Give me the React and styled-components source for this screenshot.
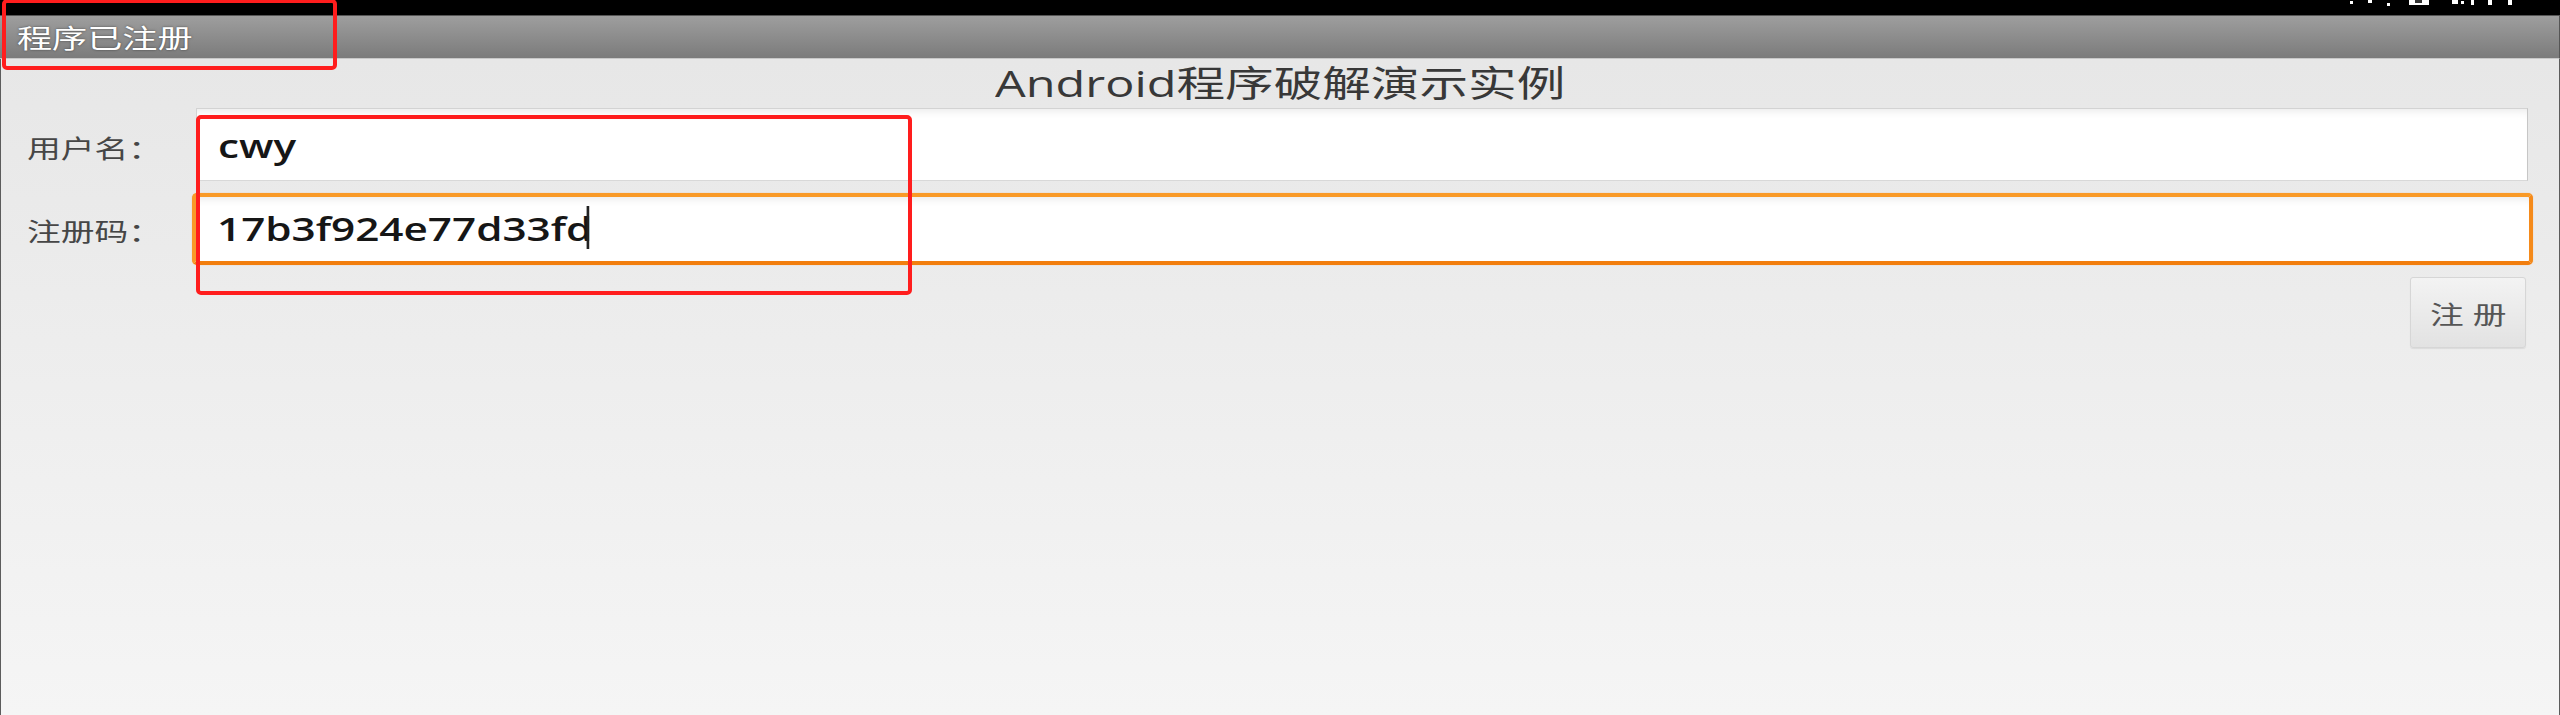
import React from 'react'
import styled, { createGlobalStyle } from 'styled-components'

// the device screenshot is stretched sideways, so text is widened to match
const STRETCH = 1.35
const FONT = `"Open Sans", "Noto Sans CJK SC", sans-serif`

const GlobalStyle = createGlobalStyle`
  html, body {
    margin: 0;
    padding: 0;
    background: #000;
  }
  body {
    font-family: ${FONT};
  }
`

const Screen = styled.div`
  position: relative;
  width: 2560px;
  height: 715px;
  overflow: hidden;
  display: flex;
  flex-direction: column;
  background: #000;
`

const StatusBar = styled.div`
  height: 15px;
  flex: none;
  box-sizing: border-box;
  padding-right: 35px;
  background: #000;
  display: flex;
  justify-content: flex-end;
`

const TitleBar = styled.div`
  height: 44px;
  flex: none;
  box-sizing: border-box;
  padding-left: 17px;
  display: flex;
  align-items: center;
  background: linear-gradient(#9e9e9e, #7b7b7b);
  border-top: 1px solid #555;
  border-bottom: 1px solid #c8c8c8;
  border-right: 1px solid #555;
  color: #fff;
  font-size: 26px;
  text-shadow: 0 0 2px rgba(0, 0, 0, 0.55);
`

const Stretch = styled.span`
  display: inline-block;
  white-space: pre;
  transform: scaleX(${p => p.$scale || STRETCH});
  transform-origin: ${p => p.$origin || 'left'} center;
`

const Content = styled.main`
  flex: 1;
  display: flex;
  flex-direction: column;
  background: linear-gradient(#e7e7e7, #f5f5f5);
  border-left: 1px solid #5c5c5c;
  border-right: 1px solid #5c5c5c;
`

const Heading = styled.h1`
  margin: 0;
  height: 49px;
  line-height: 49px;
  text-align: center;
  font-size: 36px;
  font-weight: normal;
  color: #383838;
`

const Form = styled.div`
  display: flex;
  flex-direction: column;
  gap: 12px;
  padding-right: 26px;
`

const Row = styled.div`
  display: flex;
  align-items: baseline;
`

const Label = styled.label`
  flex: none;
  width: 191px;
  box-sizing: border-box;
  padding-left: 26px;
  font-size: 25px;
  color: #464646;
`

const Field = styled.div`
  flex: 1;
  box-sizing: border-box;
  height: ${p => (p.$focused ? 72 : 73)}px;
  margin: ${p => (p.$focused ? '0' : '0 5px 0 4px')};
  padding: ${p => (p.$focused ? '2px 0 0 21px' : '3px 0 0 21px')};
  line-height: ${p => (p.$focused ? 60 : 68)}px;
  font-size: 32px;
  font-weight: 600;
  color: #161616;
  background: #fff;
  border: ${p => (p.$focused ? '4px solid #f99a27' : '1px solid #d3d3d3')};
  border-bottom-color: ${p => (p.$focused ? '#f27e0e' : '#d8d8d8')};
  border-right-color: ${p => (p.$focused ? '#f58a1a' : '#c6c6c6')};
  border-radius: ${p => (p.$focused ? 5 : 0)}px;
  box-shadow: inset 0 8px 8px -6px rgba(0, 0, 0, 0.09)
    ${p => (p.$focused ? ', 0 0 1px rgba(245, 130, 20, 0.6)' : '')};
`

const Caret = styled.span`
  display: inline-block;
  width: 1.5px;
  height: 43px;
  margin-left: -4px;
  vertical-align: -8px;
  background: #222;
`

const Actions = styled.div`
  display: flex;
  justify-content: flex-end;
  padding-right: 7px;
`

const Button = styled.button`
  width: 116px;
  height: 71px;
  padding: 0;
  display: flex;
  align-items: center;
  justify-content: center;
  background: linear-gradient(#f3f3f3, #e2e2e2);
  border: 1px solid #d6d6d6;
  border-radius: 3px;
  box-shadow: 0 1px 1px rgba(0, 0, 0, 0.08);
  font-family: ${FONT};
  font-size: 25px;
  color: #555;
`

const Annotation = styled.div`
  position: absolute;
  left: ${p => p.$x}px;
  top: ${p => p.$y}px;
  width: ${p => p.$w}px;
  height: ${p => p.$h}px;
  box-sizing: border-box;
  border: 4px solid #ff1d1d;
  border-radius: 5px;
  pointer-events: none;
`

const StatusIcons = () => (
  <svg width="180" height="15" viewBox="0 0 180 15">
    <g fill="#fff">
      <rect x="5" y="1" width="3" height="3" />
      <rect x="23" y="0" width="4" height="3" />
      <rect x="42" y="3" width="3" height="3" />
      <rect x="64" y="0" width="20" height="5" />
      <rect x="107" y="0" width="6" height="4" />
      <rect x="116" y="1" width="3" height="3" />
      <rect x="126" y="0" width="3" height="5" />
      <rect x="143" y="0" width="4" height="5" />
      <rect x="163" y="0" width="4" height="5" />
    </g>
    <rect x="70" y="0" width="7" height="3" fill="#333" />
  </svg>
)

const App = () => {
  return (
    <Screen>
      <GlobalStyle />
      <StatusBar>
        <StatusIcons />
      </StatusBar>
      <TitleBar>
        <Stretch>程序已注册</Stretch>
      </TitleBar>
      <Content>
        <Heading>
          <Stretch $origin="center">Android程序破解演示实例</Stretch>
        </Heading>
        <Form>
          <Row>
            <Label>
              <Stretch>用户名：</Stretch>
            </Label>
            <Field>
              <Stretch $scale={1.32}>cwy</Stretch>
            </Field>
          </Row>
          <Row>
            <Label>
              <Stretch>注册码：</Stretch>
            </Label>
            <Field $focused>
              <Stretch $scale={1.32}>
                17b3f924e77d33fd
                <Caret />
              </Stretch>
            </Field>
          </Row>
          <Actions>
            <Button>
              <Stretch $origin="center">注 册</Stretch>
            </Button>
          </Actions>
        </Form>
      </Content>
      <Annotation $x={2} $y={-1} $w={335} $h={71} />
      <Annotation $x={196} $y={115} $w={716} $h={180} />
    </Screen>
  )
}

export default App
